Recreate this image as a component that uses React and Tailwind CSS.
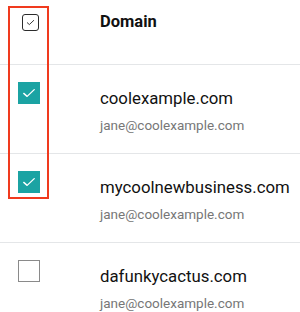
import React from 'react';

const rows = [
  { domain: 'coolexample.com', email: 'jane@coolexample.com', checked: true },
  { domain: 'mycoolnewbusiness.com', email: 'jane@coolexample.com', checked: true },
  { domain: 'dafunkycactus.com', email: 'jane@coolexample.com', checked: false },
];

const Check = ({ className, width = 2 }) => (
  <svg viewBox="0 0 24 24" className={className} fill="none" stroke="currentColor" strokeWidth={width} strokeLinecap="round" strokeLinejoin="round">
    <path d="M5 12.5l4.5 4L19 7.5" />
  </svg>
);

const RowBox = ({ checked }) =>
  checked ? (
    <div className="w-[22px] h-[22px] bg-[#1ba3a3] flex items-center justify-center text-white">
      <Check className="w-[18px] h-[18px]" width={1.8} />
    </div>
  ) : (
    <div className="w-[22px] h-[22px] border border-[#8a8a8a] bg-white" />
  );

export default function App() {
  return (
    <div className="relative w-[300px] h-[312px] bg-white overflow-hidden" style={{ fontFamily: 'Roboto, "Noto Sans", sans-serif' }}>
      {/* header */}
      <div className="flex h-[65px] border-b border-[#e4e6e8]">
        <div className="w-[60px] flex justify-center pt-[14px]">
          <div className="w-[17px] h-[17px] rounded-[3px] border-[1.5px] border-[#2b2b2b] flex items-center justify-center text-[#2b2b2b]">
            <Check className="w-[11px] h-[11px]" />
          </div>
        </div>
        <div className="pl-[40px] pt-[10px] text-[16.5px] font-bold text-[#111]">Domain</div>
      </div>

      {rows.map((r, i) => (
        <div key={i} className={`flex h-[89px] ${i < rows.length - 1 ? 'border-b border-[#e4e6e8]' : ''}`}>
          <div className="w-[58px] flex justify-center pt-[17px]">
            <RowBox checked={r.checked} />
          </div>
          <div className="pl-[42px] pt-[23px]">
            <div className="text-[16.8px] leading-[20px] text-[#111]">{r.domain}</div>
            <div className="mt-[9px] text-[13.5px] leading-[16px] text-[#777]">{r.email}</div>
          </div>
        </div>
      ))}

      {/* highlight annotation */}
      <div className="absolute left-[8px] top-[6px] w-[41px] h-[193px] border-2 border-[#f03a1e] pointer-events-none" />
    </div>
  );
}
